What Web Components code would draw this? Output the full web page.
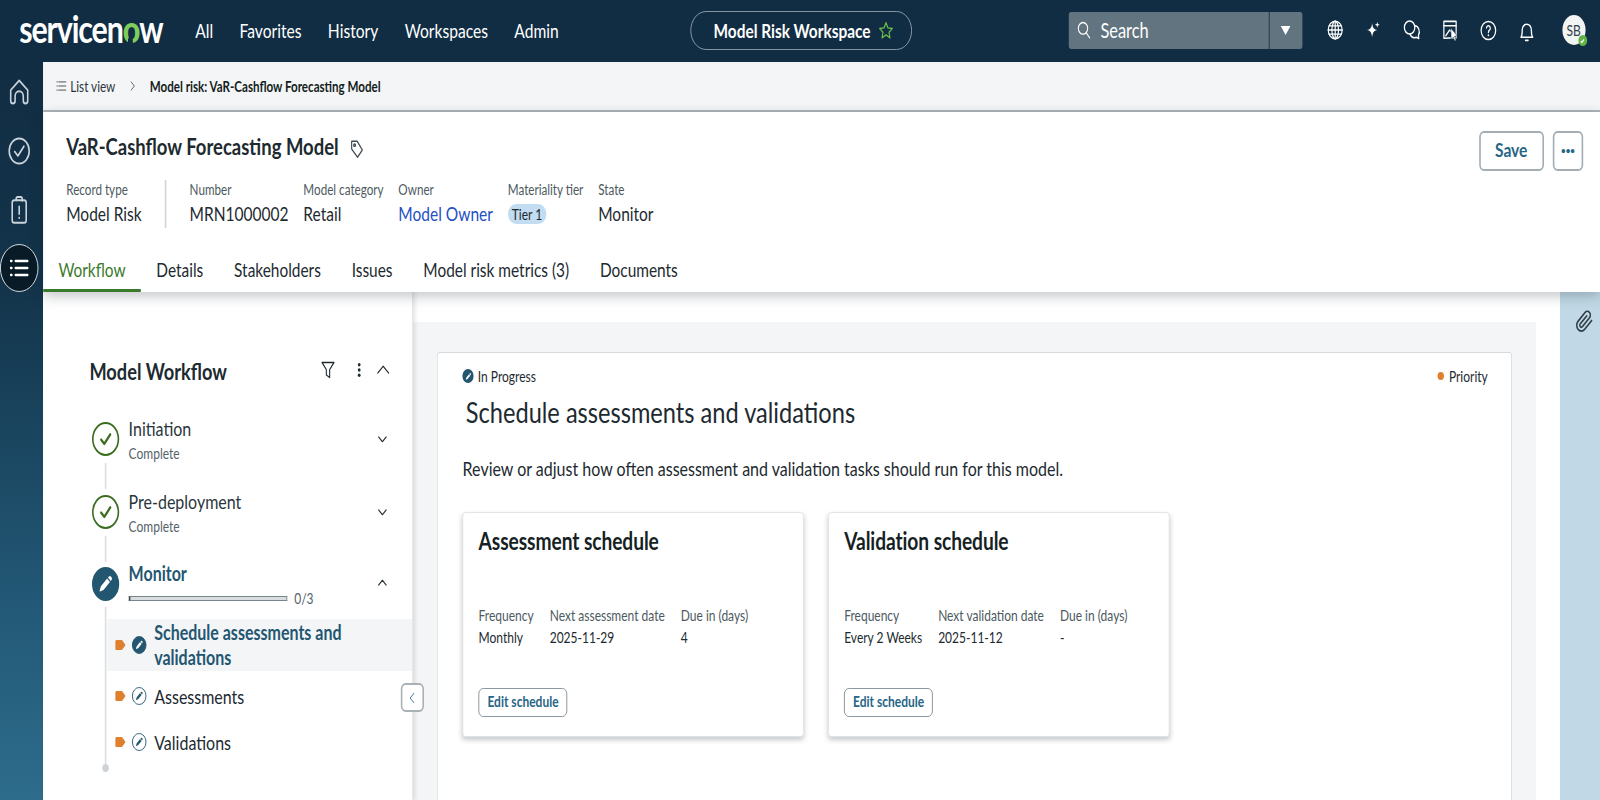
<!DOCTYPE html>
<html lang="en"><head><meta charset="utf-8"><title>Model Risk Workspace</title>
<style>
html,body{margin:0;padding:0;width:1600px;height:800px;overflow:hidden;background:#fff}
body{font-family:Lato,"Liberation Sans",sans-serif;color:#1d2a30}
</style></head><body>
<sn-app>
  <sn-header slot="header"></sn-header>
  <sn-rail slot="rail"></sn-rail>
  <sn-breadcrumb slot="content"></sn-breadcrumb>
  <sn-record slot="content"></sn-record>
  <sn-workspace slot="content">
    <sn-workflow slot="left">
      <sn-step state="complete" label="Initiation" sub="Complete"></sn-step>
      <sn-step state="complete" label="Pre-deployment" sub="Complete"></sn-step>
      <sn-step state="active" label="Monitor" progress="0/3">
        <sn-substep current>Schedule assessments and validations</sn-substep>
        <sn-substep>Assessments</sn-substep>
        <sn-substep>Validations</sn-substep>
      </sn-step>
    </sn-workflow>
    <sn-task slot="main" heading="Schedule assessments and validations">
      Review or adjust how often assessment and validation tasks should run for this model.
      <sn-schedule slot="cards" heading="Assessment schedule" next-label="Next assessment date" freq="Monthly" next="2025-11-29" due="4"></sn-schedule>
      <sn-schedule slot="cards" heading="Validation schedule" next-label="Next validation date" freq="Every 2 Weeks" next="2025-11-12" due="-"></sn-schedule>
    </sn-task>
  </sn-workspace>
</sn-app>
<script>
const S='fill="none" stroke="currentColor" stroke-width="1.6" stroke-linecap="round" stroke-linejoin="round"';
const svg=(w,h,body,vb='0 0 24 24')=>`<svg width="${w}" height="${h}" viewBox="${vb}" aria-hidden="true">${body}</svg>`;
const PEN='<path d="M15.6 5.2a1.9 1.9 0 0 1 2.7 0l.5.5a1.9 1.9 0 0 1 0 2.7l-.9.9-3.2-3.2zM13.8 7 17 10.2 9.6 17.6 5.6 18.9a.4.4 0 0 1-.5-.5l1.3-4z" fill="currentColor"/>';
const CHK='<path d="m7.5 12.5 3.2 3.4 6-7.6"/>';
function def(name,css,html){
  customElements.define(name,class extends HTMLElement{
    connectedCallback(){
      if(this.shadowRoot)return;
      const r=this.attachShadow({mode:'open'});
      const a=n=>this.getAttribute(n)||'';
      r.innerHTML=`<style>${css}</style>`+(typeof html==='function'?html(a,this):html);
    }
  });
}
def('sn-app',`
:host{display:block;width:1600px;height:800px;overflow:clip;contain:strict;background:#fff}
.stage{display:grid;width:2000px;height:800px;grid-template-columns:53.75px 1fr;grid-template-rows:62px 1fr;transform:scaleX(.8);transform-origin:0 0;overflow:hidden;background:#fff}
.h{grid-column:1/3}
.c{display:flex;flex-direction:column;min-width:0;min-height:0}
`,`<div class="stage"><div class="h"><slot name="header"></slot></div><slot name="rail"></slot><div class="c"><slot name="content"></slot></div></div>`);

def('sn-header',`
:host{display:flex;align-items:center;height:62px;box-sizing:border-box;padding-bottom:2px;background:#112d43;color:#fff}
.left{width:862.5px;display:flex;align-items:center;flex:none}
.logo{width:178px;margin-left:24px;font-size:38px;font-weight:700;letter-spacing:-1.4px;line-height:60px;white-space:nowrap;position:relative;top:-2px}
.logo b{color:#7fce5c;font-weight:900;position:relative;display:inline-block}
.logo b::after{content:"";position:absolute;left:50%;margin-left:-3.5px;top:39px;width:6px;height:6px;background:#112d43;border-radius:50% 50% 0 0}
nav{display:flex;gap:33px;margin-left:42px;font-size:19.5px}
.pill{flex:none;width:277px;height:39px;box-sizing:border-box;border:1.5px solid #93a2ad;border-radius:20px;padding-left:9px;display:flex;align-items:center;justify-content:center;gap:8px;font-size:19.25px;font-weight:700;white-space:nowrap}
.pill svg{color:#6cc04a}
.search{flex:none;margin-left:196px;width:292px;height:37px;background:#62747f;border-radius:3px;display:flex;align-items:center}
.search .f{flex:1;display:flex;align-items:center;gap:11px;padding-left:9px;font-size:20.5px;height:100%}
.search .d{width:41px;height:100%;border-left:1.5px solid #112d43;display:flex;align-items:center;justify-content:center}
.tri{width:0;height:0;border-left:6.5px solid transparent;border-right:6.5px solid transparent;border-top:9px solid #fff}
.icons{display:flex;margin-left:17px}
.icons span{width:48px;display:flex;justify-content:center;align-items:center}
.av{margin-left:20px;width:29px;height:30px;border-radius:50%;background:#f3f4f4;color:#33424b;font-size:15px;display:flex;align-items:center;justify-content:center;position:relative}
.av i{position:absolute;right:-2px;bottom:-1px;width:11px;height:11px;border-radius:50%;background:#62b245;display:flex;align-items:center;justify-content:center}
`,`<div class="left"><div class="logo">servicen<b>o</b>w</div><nav><span>All</span><span>Favorites</span><span>History</span><span>Workspaces</span><span>Admin</span></nav></div>
<div class="pill"><span>Model Risk Workspace</span>${svg(23,21,`<path d="m12 3 2.7 6 6.4.7-4.8 4.3 1.4 6.4L12 17.1l-5.7 3.3 1.4-6.4-4.8-4.3 6.4-.7z" ${S}/>`)}</div>
<div class="search"><div class="f">${svg(20,22,`<circle cx="10.5" cy="10" r="7" ${S}/><path d="m15.5 15.5 5 6" ${S}/>`)}<span>Search</span></div><div class="d"><div class="tri"></div></div></div>
<div class="icons">
<span>${svg(22,22,`<circle cx="12" cy="12" r="9.5"/><ellipse cx="12" cy="12" rx="4.5" ry="9.5"/><path d="M2.5 12h19M3.8 7.5h16.4M3.8 16.5h16.4M12 2.5v19"/>`.replace(/\/>/g,` ${S}/>`))}</span>
<span>${svg(22,22,`<path d="M10 4.5c.8 5 2.4 6.7 7 7.5-4.6.8-6.2 2.5-7 8-.8-5.500-2.400-7.200-7-8 4.600-.8 6.200-2.500 7-7.500z" fill="#fff"/><path d="m17 3 .8 2.500 2.500.8-2.500.8L17 9.500l-.8-2.400-2.500-.8 2.500-.8z" fill="#fff"/>`)}</span>
<span>${svg(24,24,`<circle cx="9" cy="9.500" r="6.500" ${S}/><path d="M15.500 7.800a6 6 0 0 1 4.500 9.500l.5 3.200-3.200-1.200a6 6 0 0 1-7.800-3.400" ${S}/>`)}</span>
<span>${svg(23,24,`<path d="M4 20.500V3h16v17z" ${S}/><path d="M4 7.500h16" ${S}/><path d="m6.500 18 5-6 2.500 2" ${S}/><path d="m13 10 8.500 8-3.500.6 2 4-1.800.9-2-4-2.700 2.200z" fill="#fff" stroke="#112d43" stroke-width=".6"/>`)}</span>
<span>${svg(23,25,`<circle cx="12" cy="12" r="9.500" ${S}/><path d="M9.500 9.500a2.500 2.500 0 1 1 3.800 2.200c-.9.500-1.300 1.100-1.300 2.300" ${S}/><circle cx="12" cy="17" r="1" fill="#fff"/>`)}</span>
<span>${svg(25,27,`<path d="M5 18.500c1.300-1.500 1.500-3 1.500-7a5.500 5.500 0 0 1 11 0c0 4 .2 5.500 1.500 7z" ${S}/><path d="M10.500 21.500h3" ${S}/>`)}</span>
</div>
<div class="av">SB<i>${svg(8,8,`<path d="m6 12.500 4 4 8-9" fill="none" stroke="#fff" stroke-width="4"/>`)}</i></div>`);

def('sn-rail',`
:host{display:flex;flex-direction:column;width:53.75px;box-sizing:border-box;padding-right:5px;color:#c9d3d9;background:linear-gradient(180deg,#112d43 0%,#13344b 30%,#235a78 75%,#2e6c8c 100%)}
.i{height:59px;flex:none;display:flex;align-items:center;justify-content:center}
.a{width:48px;height:48px;flex:none;margin:5px 0 0 0;border-radius:50%;background:#0a1b28;border:1.5px solid #e8eef1;box-sizing:border-box;color:#fff;display:flex;align-items:center;justify-content:center;align-self:center}
`,`<div class="i">${svg(30,30,`<path d="M3.500 10.500 12 2.800l8.500 7.700V19a2.200 2.200 0 0 1-4.400 0v-3.500a4.100 4.100 0 0 0-8.200 0V19a2.200 2.200 0 0 1-4.400 0z" ${S}/>`)}</div>
<div class="i">${svg(30,30,`<circle cx="12" cy="12" r="10" ${S}/>${CHK.replace('/>',` ${S}/>`)}`)}</div>
<div class="i">${svg(30,31,`<rect x="5" y="4.500" width="14" height="18" rx="2" ${S}/><path d="M9 4.500V3.500a1.500 1.500 0 0 1 1.500-1.500h3A1.500 1.500 0 0 1 15 3.500v1.500M12 9.500v6M12 18.500v.3" ${S}/>`)}</div>
<div class="a">${svg(28,28,`<path d="M8 6h13M8 12h13M8 18h13" fill="none" stroke="#fff" stroke-width="2" stroke-linecap="round"/><path d="M3 6h1M3 12h1M3 18h1" fill="none" stroke="#fff" stroke-width="2" stroke-linecap="round"/>`)}</div>`);

def('sn-breadcrumb',`
:host{display:flex;align-items:center;height:48px;flex:none;background:#f4f5f7;border-bottom:2px solid #aeb4b8;padding-left:16px;font-size:14.7px;color:#2b373d;box-sizing:content-box}
.l{display:flex;align-items:center;gap:4px}
.ch{display:flex;width:43px;justify-content:center;color:#2b373d}
b{color:#151d21;font-weight:700;font-size:14.5px}
`,`<div class="l">${svg(14,14,`<path d="M6 5h15M6 12h15M6 19h15M2 5h1M2 12h1M2 19h1" ${S}/>`)}<span>List view</span></div><div class="ch">${svg(12,14,`<path d="m8 4 8 8-8 8" ${S}/>`)}</div><b>Model risk: VaR-Cashflow Forecasting Model</b>`);

def('sn-field',`
:host{display:flex;flex-direction:column;flex:none}
.k{font-size:14.6px;line-height:20px;color:#4d5a61}
.v{margin-top:1px;font-size:19.4px;line-height:26px;color:#1d2a30;display:flex;align-items:flex-start}
`,(a)=>`<div class="k">${a('label')}</div><div class="v"><slot></slot></div>`);

def('sn-record',`
:host{display:flex;flex-direction:column;height:180px;flex:none;background:#fff;box-shadow:0 4px 14px rgba(20,30,40,.26);position:relative;z-index:3}
.top{display:flex;padding:19px 21px 0 29px;height:40px}
h1{margin:0;font-size:23.1px;line-height:30px;font-weight:700;color:#1d2a30;white-space:nowrap}
.tag{margin:6px 0 0 12px;color:#3f4c53}
.btns{margin-left:auto;display:flex;gap:11.500px}
.btn{height:40px;box-sizing:border-box;border:2px solid #a3adb3;border-radius:6px;background:#fff;color:#276586;font-weight:700;font-size:19.5px;display:flex;align-items:center;justify-content:center;padding-bottom:3px}
.save{width:81px}.more{width:38px;font-size:10px;letter-spacing:0}
.meta{display:flex;padding-left:29px;margin-top:9px;gap:18.500px}
.div{width:2px;background:#cfd4d7;height:48px;margin:0 10.500px}
a{color:#2450c4;text-decoration:none}
.tier{display:inline-flex;align-items:center;height:20px;padding:0 5px;border-radius:10px;background:#c2dcf1;font-size:15px;color:#1d2a30;margin-top:3px}
.tabs{display:flex;margin-top:auto;height:41px;font-size:19.3px;color:#1d2a30}
.tab{padding:0 19.250px 2px;display:flex;align-items:center;box-sizing:border-box;height:41px;border-bottom:3px solid transparent;white-space:nowrap}
.tab.on{color:#3b7a2b;border-color:#3b7a2b}
`,`<div class="top"><h1>VaR-Cashflow Forecasting Model</h1><div class="tag">${svg(22,24,`<path d="M5 3.500h7.500L19.500 13l-6.500 8L5 12z" ${S}/><circle cx="9" cy="7.800" r="1.300" ${S}/>`)}</div>
<div class="btns"><div class="btn save">Save</div><div class="btn more">•••</div></div></div>
<div class="meta"><sn-field label="Record type">Model Risk</sn-field><div class="div"></div>
<sn-field label="Number">MRN1000002</sn-field><sn-field label="Model category">Retail</sn-field>
<sn-field label="Owner"><a>Model Owner</a></sn-field><sn-field label="Materiality tier"><span class="tier">Tier 1</span></sn-field><sn-field label="State">Monitor</sn-field></div>
<div class="tabs"><div class="tab on">Workflow</div><div class="tab">Details</div><div class="tab">Stakeholders</div><div class="tab">Issues</div><div class="tab">Model risk metrics (3)</div><div class="tab">Documents</div></div>`);

def('sn-workspace',`
:host{display:flex;flex:1;min-height:0;background:#fff}
.m{width:1403.500px;flex:none;margin-top:30px;background:#f4f5f7;padding:30px 30px 0 30px;box-sizing:border-box;display:flex;min-height:0}
.gap{width:30px;flex:none}
.r{flex:1;background:#c1d9e6;display:flex;padding:18px 0 0 19px;box-sizing:border-box;align-items:flex-start;color:#2f3e47}
`,`<slot name="left"></slot><div class="m"><slot name="main"></slot></div><div class="gap"></div><div class="r">${svg(23,23,`<path d="M21.440 11.050l-9.190 9.190a6 6 0 0 1-8.490-8.490l9.190-9.190a4 4 0 0 1 5.660 5.660l-9.200 9.190a2 2 0 0 1-2.830-2.830l8.490-8.480" fill="none" stroke="currentColor" stroke-width="1.900" stroke-linecap="round" stroke-linejoin="round"/>`)}</div>`);

def('sn-workflow',`
:host{display:flex;flex-direction:column;width:462.500px;flex:none;box-sizing:border-box;background:#fff;border-right:1px solid #e1e4e6;box-shadow:3px 0 5px rgba(30,40,50,.14);position:relative;padding:64px 0 0 61px;z-index:2}
.t{display:flex;align-items:center;height:30px;padding-right:27px;color:#1d2a30}
h2{margin:0;font-size:22.800px;font-weight:700;line-height:30px;white-space:nowrap;margin-left:-3px}
.ic{margin-left:auto;display:flex;align-items:center;margin-top:-3px}
.ic svg{display:block}
.s{margin-top:36px;display:flex;flex-direction:column}
.cb{position:absolute;left:447px;top:391px;width:29px;height:29px;box-sizing:border-box;border:2px solid #a8b1b6;border-radius:6px;background:#fff;display:flex;align-items:center;justify-content:center;color:#2a6a8a}
`,`<div class="t"><h2>Model Workflow</h2><div class="ic">${svg(20,24,`<path d="M3 3h18l-6.500 8.500V21l-5-3v-6.500z" ${S}/>`)}<span style="width:20px"></span>${svg(18,22,`<circle cx="12" cy="5" r="2.300" fill="#1d2a30"/><circle cx="12" cy="12" r="2.300" fill="#1d2a30"/><circle cx="12" cy="19" r="2.300" fill="#1d2a30"/>`)}<span style="width:12px"></span>${svg(18,20,`<path d="m3 16 9-9 9 9" ${S}/>`)}</div></div>
<div class="s"><slot></slot></div><div class="cb">${svg(14,16,`<path d="m16 4-8 8 8 8" ${S}/>`)}</div>`);

def('sn-step',`
:host{display:flex;flex-direction:column}
.h{display:grid;grid-template-columns:34px 1fr 16px;column-gap:12px;height:34px;padding-right:29px}
.c{width:34px;height:34px;border-radius:50%;box-sizing:border-box;display:flex;align-items:center;justify-content:center}
.complete .c{border:2.500px solid #3b6d1f;color:#3b6d1f}
.active .c{background:#235671;color:#fff}
.x{margin-top:-6px}
.active .x{margin-top:-6px}
.l{font-size:20px;line-height:24px;white-space:nowrap;color:#2a363c}
.active .l{color:#235671;font-weight:700}
.sub{margin-top:3px;font-size:15px;line-height:20px;color:#56636a}
.p{display:flex;align-items:center;gap:9px;height:20px;margin-top:3px;font-size:15px;color:#56636a}
.bar{width:198px;height:5px;box-sizing:border-box;border:1px solid #78858b;border-left:2.500px solid #3c474d;background:#d9dddf}
.ch{margin-top:9px;color:#2a363c}
.active .ch{margin-top:8px}
.tail{display:flex;margin-left:16px}
.line{width:2.500px;background:#dadee0;flex:none}
.complete .tail{height:26px;margin-top:7px;margin-bottom:5.500px}
.active .tail{margin-top:6px}
.b{flex:1;min-width:0;margin-left:.5px;padding-top:12px}
.dot{width:8px;height:8px;border-radius:50%;background:#ccd2d5;margin:-1px 0 0 13.500px}
`,(a)=>{const act=a('state')==='active';return `<div class="${a('state')}"><div class="h"><div class="c">${act?svg(26,26,PEN):svg(30,30,CHK.replace('/>',' fill="none" stroke="currentColor" stroke-width="2" stroke-linecap="round" stroke-linejoin="round"/>'))}</div>
<div class="x"><div class="l">${a('label')}</div>${act?`<div class="p"><div class="bar"></div><span>${a('progress')}</span></div>`:`<div class="sub">${a('sub')}</div>`}</div>
<div class="ch">${svg(16,16,act?`<path d="m5 15 7-7 7 7" ${S.replace('1.6','2')}/>`:`<path d="m5 9 7 7 7-7" ${S.replace('1.6','2')}/>`)}</div></div>
<div class="tail"><div class="line"></div>${act?'<div class="b"><slot></slot></div>':''}</div>${act?'<div class="dot"></div>':''}</div>`});

def('sn-substep',`
:host{display:flex;align-items:center;height:46px;box-sizing:border-box;padding-left:10px;font-size:20px;line-height:25px;color:#1d2a30}
:host([current]){height:52px;background:#f4f5f7;color:#235671;font-weight:700;margin-bottom:2px}
.tag{display:flex;flex:none;margin-right:8px;color:#e07f2e}
.i{width:18px;height:18px;border-radius:50%;box-sizing:border-box;border:1.5px solid #235671;color:#235671;flex:none;display:flex;align-items:center;justify-content:center;margin-right:10px}
:host([current]) .i{background:#235671;color:#fff}
.t{width:250px}
`,`<div class="tag">${svg(13,10,`<path d="M1.500 0H8.500l4.500 5-4.500 5H1.500A1.500 1.500 0 0 1 0 8.500v-7A1.500 1.500 0 0 1 1.500 0z" fill="currentColor"/>`,'0 0 13 10')}</div><div class="i">${svg(14,14,PEN)}</div><div class="t"><slot></slot></div>`);

def('sn-task',`
:host{display:flex;flex-direction:column;flex:1;background:#fff;border:1px solid #d6dadc;border-bottom:0;border-radius:4px 4px 0 0;padding:13px 29px 0 31px;box-sizing:border-box;min-height:0}
.st{display:flex;justify-content:space-between;font-size:15px;line-height:20px;color:#1d2a30}
.st span{display:flex;align-items:center}
.d{width:14px;height:14px;border-radius:50%;background:#235671;color:#fff;display:flex;align-items:center;justify-content:center;margin-right:5px}
.o{width:8px;height:8px;border-radius:50%;background:#e07f2e;margin-right:6px}
h2{margin:9px 0 0 4px;font-size:29.5px;line-height:34px;font-weight:400;color:#1d2a30;white-space:nowrap}
.p{margin-top:26px;font-size:20px;line-height:26px;color:#1d2a30;white-space:nowrap}
.cards{display:flex;gap:30px;margin-top:31px}
`,(a)=>`<div class="st"><span><i class="d">${svg(11,11,PEN)}</i>In Progress</span><span><i class="o"></i>Priority</span></div><h2>${a('heading')}</h2><div class="p"><slot></slot></div><div class="cards"><slot name="cards"></slot></div>`);

def('sn-schedule',`
:host{display:flex;flex-direction:column;width:427px;height:225px;box-sizing:border-box;background:#fff;border:1px solid #dfe2e4;border-radius:4px;box-shadow:0 3px 6px rgba(30,40,50,.25);padding:13px 20px 19px 19px}
h3{margin:0;font-size:24px;line-height:30px;font-weight:700;color:#161f24;white-space:nowrap;letter-spacing:-.1px}
.g{display:grid;grid-template-columns:auto auto auto;justify-content:start;column-gap:20px;row-gap:2px;margin-top:49px;font-size:15px;line-height:20px;color:#1d2a30}
.k{color:#4d5a61}
.b{margin-top:auto;align-self:flex-start;width:111px;height:29px;box-sizing:border-box;border:1.5px solid #7f8d95;border-radius:6px;color:#276586;font-weight:700;font-size:15px;display:flex;align-items:center;justify-content:center;padding-bottom:3px}
`,(a)=>`<h3>${a('heading')}</h3><div class="g"><div class="k">Frequency</div><div class="k">${a('next-label')}</div><div class="k">Due in (days)</div><div>${a('freq')}</div><div>${a('next')}</div><div>${a('due')}</div></div><div class="b">Edit schedule</div>`);
</script>
</body></html>
